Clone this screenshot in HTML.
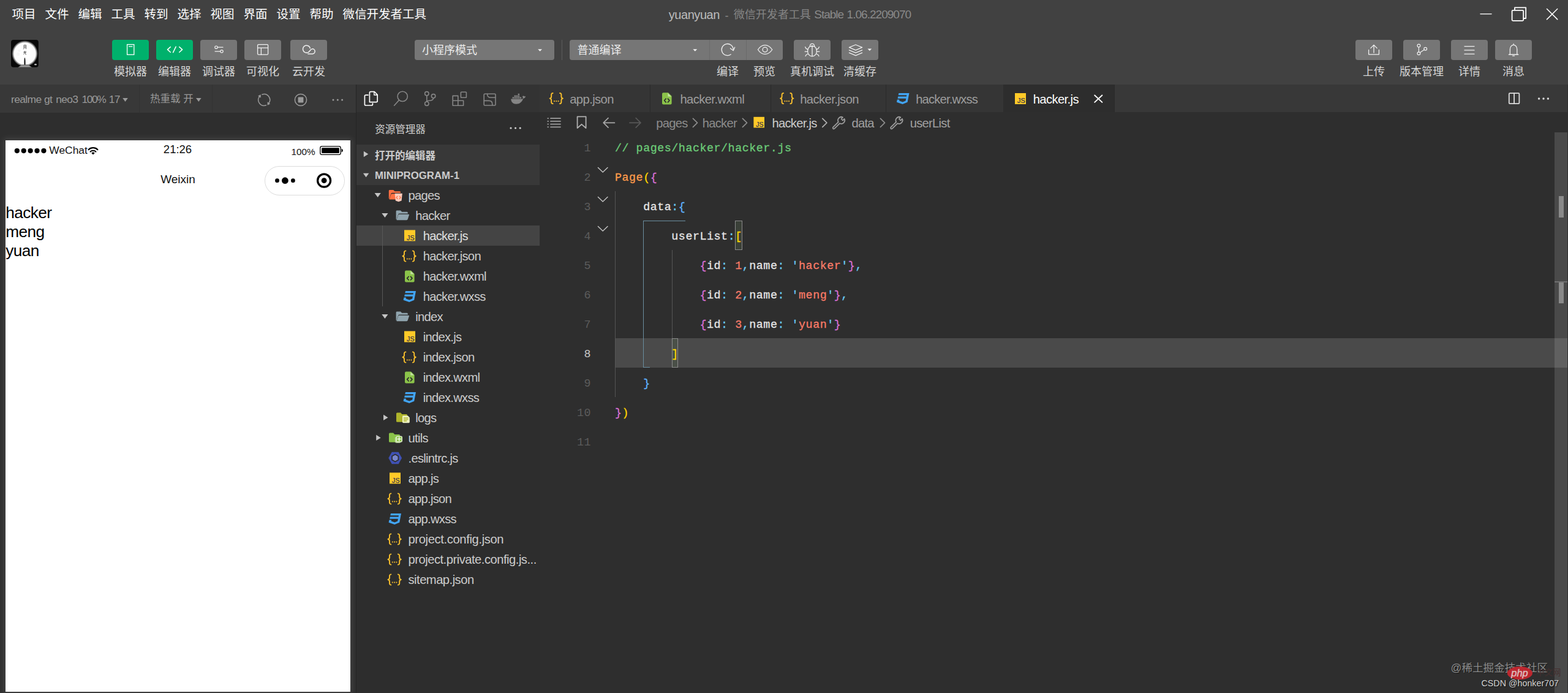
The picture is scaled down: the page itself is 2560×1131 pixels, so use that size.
<!DOCTYPE html>
<html lang="zh-CN"><head><meta charset="utf-8"><title>微信开发者工具</title><style>
html,body{margin:0;padding:0;background:#2e2e2e;}
body{width:2560px;height:1131px;overflow:hidden;font-family:"Liberation Sans","Noto Sans CJK SC",sans-serif;}
#root{position:relative;width:2560px;height:1131px;overflow:hidden;}
#root div,#root span{position:absolute;white-space:pre;box-sizing:border-box;}
#root section{position:absolute;left:0;top:0;width:0;height:0;}
#root svg{position:absolute;left:0;top:0;}
</style></head><body><div id="root">
<section id="frames">
<div style="left:0px;top:0px;width:2560px;height:138px;background:#414141;"></div>
<div style="left:0px;top:138px;width:581px;height:46px;background:#383838;"></div>
<div style="left:0px;top:184px;width:581px;height:947px;background:#2e2e2e;"></div>
<div style="left:0;top:184px;width:581px;height:947px;overflow:hidden"><div style="left:9px;top:45px;width:563px;height:900px;background:#fff;box-shadow:0 0 9px 3px rgba(255,255,255,0.10)"></div></div>
<div style="left:581px;top:138px;width:1px;height:993px;background:#252525;"></div>
<div style="left:582px;top:138px;width:299px;height:45px;background:#333333;"></div>
<div style="left:582px;top:183px;width:299px;height:948px;background:#2d2d2d;"></div>
<div style="left:582px;top:236px;width:299px;height:66px;background:#383838;"></div>
<div style="left:582px;top:368px;width:299px;height:33px;background:#444444;"></div>
<div style="left:881px;top:138px;width:1679px;height:45px;background:#383838;"></div>
<div style="left:881px;top:183px;width:1679px;height:948px;background:#2e2e2e;"></div>
</section>
<section id="menubar">
<span style="left:19.5px;top:8.3px;height:31px;line-height:31px;font-size:19.5px;color:#ffffff;">项目</span>
<span style="left:73.5px;top:8.3px;height:31px;line-height:31px;font-size:19.5px;color:#ffffff;">文件</span>
<span style="left:127.5px;top:8.3px;height:31px;line-height:31px;font-size:19.5px;color:#ffffff;">编辑</span>
<span style="left:181.5px;top:8.3px;height:31px;line-height:31px;font-size:19.5px;color:#ffffff;">工具</span>
<span style="left:235.5px;top:8.3px;height:31px;line-height:31px;font-size:19.5px;color:#ffffff;">转到</span>
<span style="left:289.5px;top:8.3px;height:31px;line-height:31px;font-size:19.5px;color:#ffffff;">选择</span>
<span style="left:343.5px;top:8.3px;height:31px;line-height:31px;font-size:19.5px;color:#ffffff;">视图</span>
<span style="left:397.5px;top:8.3px;height:31px;line-height:31px;font-size:19.5px;color:#ffffff;">界面</span>
<span style="left:451.5px;top:8.3px;height:31px;line-height:31px;font-size:19.5px;color:#ffffff;">设置</span>
<span style="left:505.5px;top:8.3px;height:31px;line-height:31px;font-size:19.5px;color:#ffffff;">帮助</span>
<span style="left:559.5px;top:8.3px;height:31px;line-height:31px;font-size:19.5px;color:#ffffff;">微信开发者工具</span>
<span style="left:1091.8px;top:7.999999999999999px;height:32px;line-height:32px;font-size:20px;color:#bcbcbc;letter-spacing:-0.45px;">yuanyuan</span>
<span style="left:1183.6px;top:11.7px;height:29px;line-height:29px;font-size:18px;color:#8a8a8a;">-</span>
<span style="left:1197.7px;top:9.600000000000001px;height:29px;line-height:29px;font-size:18px;color:#858585;">微信开发者工具</span>
<span style="left:1329.2px;top:9.100000000000001px;height:30px;line-height:30px;font-size:19px;color:#8a8a8a;letter-spacing:-0.98px;">Stable</span>
<span style="left:1382.6px;top:9.100000000000001px;height:30px;line-height:30px;font-size:19px;color:#8a8a8a;letter-spacing:-0.98px;">1.06.2209070</span>
</section>
<section id="toolbar">
<div style="left:183px;top:65px;width:60px;height:33px;background:#00b16c;border-radius:4px;"></div>
<div style="left:255px;top:65px;width:60px;height:33px;background:#00b16c;border-radius:4px;"></div>
<div style="left:327px;top:65px;width:60px;height:33px;background:#767676;border-radius:4px;"></div>
<div style="left:399px;top:65px;width:60px;height:33px;background:#767676;border-radius:4px;"></div>
<div style="left:474px;top:65px;width:60px;height:33px;background:#767676;border-radius:4px;"></div>
<span style="left:213px;top:102.7px;height:29px;line-height:29px;font-size:18px;color:#d6d6d6;transform:translateX(-50%);">模拟器</span>
<span style="left:285px;top:102.7px;height:29px;line-height:29px;font-size:18px;color:#d6d6d6;transform:translateX(-50%);">编辑器</span>
<span style="left:357px;top:102.7px;height:29px;line-height:29px;font-size:18px;color:#d6d6d6;transform:translateX(-50%);">调试器</span>
<span style="left:429px;top:102.7px;height:29px;line-height:29px;font-size:18px;color:#d6d6d6;transform:translateX(-50%);">可视化</span>
<span style="left:504px;top:102.7px;height:29px;line-height:29px;font-size:18px;color:#d6d6d6;transform:translateX(-50%);">云开发</span>
<div style="left:677px;top:65px;width:228px;height:33px;background:#767676;border-radius:4px;"></div>
<span style="left:689px;top:68.3px;height:29px;line-height:29px;font-size:18px;color:#ececec;">小程序模式</span>
<div style="left:917px;top:65px;width:1px;height:33px;background:#5c5c5c;"></div>
<div style="left:930px;top:65px;width:348px;height:33px;background:#767676;border-radius:4px;"></div>
<div style="left:1158px;top:65px;width:1px;height:33px;background:#6a6a6a;"></div>
<div style="left:1218px;top:65px;width:1px;height:33px;background:#6a6a6a;"></div>
<span style="left:942.5px;top:68.3px;height:29px;line-height:29px;font-size:18px;color:#ececec;">普通编译</span>
<div style="left:1296px;top:65px;width:60px;height:33px;background:#767676;border-radius:4px;"></div>
<div style="left:1374px;top:65px;width:60px;height:33px;background:#767676;border-radius:4px;"></div>
<span style="left:1188px;top:102.7px;height:29px;line-height:29px;font-size:18px;color:#d6d6d6;transform:translateX(-50%);">编译</span>
<span style="left:1248px;top:102.7px;height:29px;line-height:29px;font-size:18px;color:#d6d6d6;transform:translateX(-50%);">预览</span>
<span style="left:1326px;top:102.7px;height:29px;line-height:29px;font-size:18px;color:#d6d6d6;transform:translateX(-50%);">真机调试</span>
<span style="left:1404px;top:102.7px;height:29px;line-height:29px;font-size:18px;color:#d6d6d6;transform:translateX(-50%);">清缓存</span>
<div style="left:2213px;top:65px;width:60px;height:33px;background:#767676;border-radius:4px;"></div>
<div style="left:2291px;top:65px;width:60px;height:33px;background:#767676;border-radius:4px;"></div>
<div style="left:2369px;top:65px;width:60px;height:33px;background:#767676;border-radius:4px;"></div>
<div style="left:2441px;top:65px;width:60px;height:33px;background:#767676;border-radius:4px;"></div>
<span style="left:2243px;top:102.7px;height:29px;line-height:29px;font-size:18px;color:#d6d6d6;transform:translateX(-50%);">上传</span>
<span style="left:2321px;top:102.7px;height:29px;line-height:29px;font-size:18px;color:#d6d6d6;transform:translateX(-50%);">版本管理</span>
<span style="left:2399px;top:102.7px;height:29px;line-height:29px;font-size:18px;color:#d6d6d6;transform:translateX(-50%);">详情</span>
<span style="left:2471px;top:102.7px;height:29px;line-height:29px;font-size:18px;color:#d6d6d6;transform:translateX(-50%);">消息</span>
</section>
<section id="simulator-toolbar">
<span style="left:18.1px;top:148.10000000000002px;height:28px;line-height:28px;font-size:17.4px;color:#999999;letter-spacing:-0.62px;">realme</span>
<span style="left:71.9px;top:148.10000000000002px;height:28px;line-height:28px;font-size:17.4px;color:#999999;letter-spacing:-0.62px;">gt</span>
<span style="left:91.2px;top:148.10000000000002px;height:28px;line-height:28px;font-size:17.4px;color:#999999;letter-spacing:-0.62px;">neo3</span>
<span style="left:133.6px;top:148.10000000000002px;height:28px;line-height:28px;font-size:17.4px;color:#999999;letter-spacing:-1.45px;">100%</span>
<span style="left:177.8px;top:148.10000000000002px;height:28px;line-height:28px;font-size:17.4px;color:#999999;letter-spacing:-0.62px;">17</span>
<div style="left:227px;top:138px;width:1px;height:46px;background:#333333;"></div>
<div style="left:346px;top:138px;width:1px;height:46px;background:#333333;"></div>
<span style="left:245px;top:148.4px;height:26px;line-height:26px;font-size:16.5px;color:#999999;">热重载</span>
<span style="left:299.2px;top:148.4px;height:26px;line-height:26px;font-size:16.5px;color:#999999;">开</span>
</section>
<section id="simulator">
<span style="left:80.3px;top:230.70000000000002px;height:28px;line-height:28px;font-size:17.4px;color:#111111;">WeChat</span>
<span style="left:290px;top:229.4px;height:30px;line-height:30px;font-size:18.5px;color:#111111;transform:translateX(-50%);">21:26</span>
<span style="left:475.5px;top:235.60000000000002px;height:24px;line-height:24px;font-size:15.3px;color:#111111;">100%</span>
<span style="left:290.5px;top:278.40000000000003px;height:30px;line-height:30px;font-size:19px;color:#111111;transform:translateX(-50%);">Weixin</span>
<div style="left:432px;top:271px;width:131px;height:48px;background:#ffffff;border:1px solid #dcdcdc;border-radius:24px;"></div>
<span style="left:9.3px;top:326.2px;height:42px;line-height:42px;font-size:26.2px;color:#000000;letter-spacing:-0.6px;">hacker</span>
<span style="left:9.3px;top:357.0px;height:42px;line-height:42px;font-size:26.2px;color:#000000;letter-spacing:-0.6px;">meng</span>
<span style="left:9.3px;top:387.8px;height:42px;line-height:42px;font-size:26.2px;color:#000000;letter-spacing:-0.6px;">yuan</span>
</section>
<section id="explorer">
<span style="left:612.3px;top:197.8px;height:26px;line-height:26px;font-size:16.5px;color:#d0d0d0;">资源管理器</span>
<span style="left:612px;top:240.8px;height:26px;line-height:26px;font-size:16.5px;color:#cccccc;font-weight:bold;">打开的编辑器</span>
<span style="left:612px;top:272.7px;height:27px;line-height:27px;font-size:16.8px;color:#cccccc;font-weight:bold;">MINIPROGRAM-1</span>
<span style="left:666.5px;top:302.90000000000003px;height:32px;line-height:32px;font-size:20.2px;color:#cccccc;letter-spacing:-0.72px;">pages</span>
<span style="left:678.2px;top:335.90000000000003px;height:32px;line-height:32px;font-size:20.2px;color:#cccccc;letter-spacing:-0.72px;">hacker</span>
<span style="left:690.7px;top:368.90000000000003px;height:32px;line-height:32px;font-size:20.2px;color:#e0e0e0;letter-spacing:-0.72px;">hacker.js</span>
<span style="left:690.7px;top:401.90000000000003px;height:32px;line-height:32px;font-size:20.2px;color:#cccccc;letter-spacing:-0.72px;">hacker.json</span>
<span style="left:690.7px;top:434.90000000000003px;height:32px;line-height:32px;font-size:20.2px;color:#cccccc;letter-spacing:-0.72px;">hacker.wxml</span>
<span style="left:690.7px;top:467.90000000000003px;height:32px;line-height:32px;font-size:20.2px;color:#cccccc;letter-spacing:-0.72px;">hacker.wxss</span>
<span style="left:678.2px;top:500.90000000000003px;height:32px;line-height:32px;font-size:20.2px;color:#cccccc;letter-spacing:-0.72px;">index</span>
<span style="left:690.7px;top:533.9px;height:32px;line-height:32px;font-size:20.2px;color:#cccccc;letter-spacing:-0.72px;">index.js</span>
<span style="left:690.7px;top:566.9px;height:32px;line-height:32px;font-size:20.2px;color:#cccccc;letter-spacing:-0.72px;">index.json</span>
<span style="left:690.7px;top:599.9px;height:32px;line-height:32px;font-size:20.2px;color:#cccccc;letter-spacing:-0.72px;">index.wxml</span>
<span style="left:690.7px;top:632.9px;height:32px;line-height:32px;font-size:20.2px;color:#cccccc;letter-spacing:-0.72px;">index.wxss</span>
<span style="left:678.2px;top:665.9px;height:32px;line-height:32px;font-size:20.2px;color:#cccccc;letter-spacing:-0.72px;">logs</span>
<span style="left:666.5px;top:698.9px;height:32px;line-height:32px;font-size:20.2px;color:#cccccc;letter-spacing:-0.72px;">utils</span>
<span style="left:666.5px;top:731.9px;height:32px;line-height:32px;font-size:20.2px;color:#cccccc;letter-spacing:-0.72px;">.eslintrc.js</span>
<span style="left:666.5px;top:764.9px;height:32px;line-height:32px;font-size:20.2px;color:#cccccc;letter-spacing:-0.72px;">app.js</span>
<span style="left:666.5px;top:797.9px;height:32px;line-height:32px;font-size:20.2px;color:#cccccc;letter-spacing:-0.72px;">app.json</span>
<span style="left:666.5px;top:830.9px;height:32px;line-height:32px;font-size:20.2px;color:#cccccc;letter-spacing:-0.72px;">app.wxss</span>
<span style="left:666.5px;top:863.9px;height:32px;line-height:32px;font-size:20.2px;color:#cccccc;letter-spacing:-0.37px;">project.config.json</span>
<span style="left:666.5px;top:896.9px;height:32px;line-height:32px;font-size:20.2px;color:#cccccc;letter-spacing:-0.5px;">project.private.config.js...</span>
<span style="left:666.5px;top:929.9px;height:32px;line-height:32px;font-size:20.2px;color:#cccccc;letter-spacing:-0.52px;">sitemap.json</span>
<div style="left:624px;top:368px;width:1px;height:132px;background:#585858;"></div>
</section>
<section id="tabs">
<div style="left:881px;top:138px;width:180px;height:45px;background:#353535;"></div>
<div style="left:1061px;top:138px;width:1px;height:45px;background:#2a2a2a;"></div>
<span style="left:930.2px;top:145.9px;height:32px;line-height:32px;font-size:20.2px;color:#9d9d9d;letter-spacing:-0.58px;">app.json</span>
<div style="left:1062px;top:138px;width:196px;height:45px;background:#353535;"></div>
<div style="left:1258px;top:138px;width:1px;height:45px;background:#2a2a2a;"></div>
<span style="left:1110.4px;top:145.9px;height:32px;line-height:32px;font-size:20.2px;color:#9d9d9d;letter-spacing:-0.58px;">hacker.wxml</span>
<div style="left:1259px;top:138px;width:187px;height:45px;background:#353535;"></div>
<div style="left:1446px;top:138px;width:1px;height:45px;background:#2a2a2a;"></div>
<span style="left:1306.2px;top:145.9px;height:32px;line-height:32px;font-size:20.2px;color:#9d9d9d;letter-spacing:-0.58px;">hacker.json</span>
<div style="left:1447px;top:138px;width:191px;height:45px;background:#353535;"></div>
<div style="left:1638px;top:138px;width:1px;height:45px;background:#2a2a2a;"></div>
<span style="left:1495.2px;top:145.9px;height:32px;line-height:32px;font-size:20.2px;color:#9d9d9d;letter-spacing:-0.82px;">hacker.wxss</span>
<div style="left:1638px;top:138px;width:180.6px;height:45px;background:#2d2d2d;"></div>
<div style="left:1818.6px;top:138px;width:1px;height:45px;background:#2a2a2a;"></div>
<span style="left:1686.7px;top:145.9px;height:32px;line-height:32px;font-size:20.2px;color:#ffffff;letter-spacing:-0.6px;">hacker.js</span>
</section>
<section id="breadcrumbs">
<span style="left:1071.2px;top:184.8px;height:32px;line-height:32px;font-size:20.2px;color:#8c8c8c;letter-spacing:-0.72px;">pages</span>
<span style="left:1146.7px;top:184.8px;height:32px;line-height:32px;font-size:20.2px;color:#8c8c8c;letter-spacing:-0.72px;">hacker</span>
<span style="left:1260.4px;top:184.8px;height:32px;line-height:32px;font-size:20.2px;color:#cccccc;letter-spacing:-0.72px;">hacker.js</span>
<span style="left:1390.4px;top:184.8px;height:32px;line-height:32px;font-size:20.2px;color:#a0a0a0;letter-spacing:-0.72px;">data</span>
<span style="left:1485.7px;top:184.8px;height:32px;line-height:32px;font-size:20.2px;color:#a0a0a0;letter-spacing:-0.72px;">userList</span>
</section>
<section id="editor">
<div style="left:1004px;top:552px;width:1534px;height:48px;background:#4a4a4a;"></div>
<div style="left:2538px;top:216px;width:21px;height:915px;background:#4a4a4a;"></div>
<div style="left:2538px;top:552px;width:21px;height:48px;background:#606060;"></div>
<div style="left:2545px;top:320px;width:8px;height:35px;background:#8a8a8a;"></div>
<div style="left:2538px;top:459px;width:21px;height:2px;background:#707070;"></div>
<div style="left:2545px;top:461px;width:8px;height:34px;background:#8a8a8a;"></div>
<div style="left:1004px;top:312px;width:1px;height:336px;background:#555555;"></div>
<div style="left:1097px;top:408px;width:1px;height:144px;background:#555555;"></div>
<div style="left:1050px;top:360px;width:1px;height:240px;background:#6a8ea0;"></div>
<div style="left:1050px;top:360px;width:69px;height:1px;background:#6a8ea0;"></div>
<div style="left:1050px;top:599px;width:11px;height:1px;background:#6a8ea0;"></div>
<div style="left:1200px;top:360px;width:12px;height:48px;background:#3a4038;border:1px solid #8a8a8a;"></div>
<div style="left:1097px;top:552px;width:10px;height:48px;background:#4a5048;border:1px solid #8a8a8a;"></div>
<div style="left:1004px;top:219.4px;height:48px;line-height:48px;font-family:'Liberation Mono',monospace;font-size:18.33px;letter-spacing:0.54px;color:#e6e6e6;-webkit-text-stroke:0.3px"><span style="position:static;color:#6ccb78">// pages/hacker/hacker.js</span></div>
<div style="left:900px;width:65px;text-align:right;top:218.9px;height:48px;line-height:48px;font-family:'Liberation Mono',monospace;font-size:18.33px;letter-spacing:0.54px;color:#5c5c5c">1</div>
<div style="left:1004px;top:267.4px;height:48px;line-height:48px;font-family:'Liberation Mono',monospace;font-size:18.33px;letter-spacing:0.54px;color:#e6e6e6;-webkit-text-stroke:0.3px"><span style="position:static;color:#fc9b4b">Page</span><span style="position:static;color:#ffd700">(</span><span style="position:static;color:#da70d6">{</span></div>
<div style="left:900px;width:65px;text-align:right;top:266.9px;height:48px;line-height:48px;font-family:'Liberation Mono',monospace;font-size:18.33px;letter-spacing:0.54px;color:#5c5c5c">2</div>
<div style="left:1004px;top:315.4px;height:48px;line-height:48px;font-family:'Liberation Mono',monospace;font-size:18.33px;letter-spacing:0.54px;color:#e6e6e6;-webkit-text-stroke:0.3px">    <span style="position:static;color:#e6e6e6">data</span><span style="position:static;color:#6ccdf5">:</span><span style="position:static;color:#5fb3ff">{</span></div>
<div style="left:900px;width:65px;text-align:right;top:314.9px;height:48px;line-height:48px;font-family:'Liberation Mono',monospace;font-size:18.33px;letter-spacing:0.54px;color:#5c5c5c">3</div>
<div style="left:1004px;top:363.4px;height:48px;line-height:48px;font-family:'Liberation Mono',monospace;font-size:18.33px;letter-spacing:0.54px;color:#e6e6e6;-webkit-text-stroke:0.3px">        <span style="position:static;color:#e6e6e6">userList</span><span style="position:static;color:#6ccdf5">:</span><span style="position:static;color:#ffd700">[</span></div>
<div style="left:900px;width:65px;text-align:right;top:362.9px;height:48px;line-height:48px;font-family:'Liberation Mono',monospace;font-size:18.33px;letter-spacing:0.54px;color:#5c5c5c">4</div>
<div style="left:1004px;top:411.4px;height:48px;line-height:48px;font-family:'Liberation Mono',monospace;font-size:18.33px;letter-spacing:0.54px;color:#e6e6e6;-webkit-text-stroke:0.3px">            <span style="position:static;color:#da70d6">{</span><span style="position:static;color:#e6e6e6">id</span><span style="position:static;color:#6ccdf5">:</span> <span style="position:static;color:#f97b68">1</span><span style="position:static;color:#6ccdf5">,</span><span style="position:static;color:#e6e6e6">name</span><span style="position:static;color:#6ccdf5">:</span> <span style="position:static;color:#6ccdf5">&#x27;</span><span style="position:static;color:#f97b68">hacker</span><span style="position:static;color:#6ccdf5">&#x27;</span><span style="position:static;color:#da70d6">}</span><span style="position:static;color:#6ccdf5">,</span></div>
<div style="left:900px;width:65px;text-align:right;top:410.9px;height:48px;line-height:48px;font-family:'Liberation Mono',monospace;font-size:18.33px;letter-spacing:0.54px;color:#5c5c5c">5</div>
<div style="left:1004px;top:459.4px;height:48px;line-height:48px;font-family:'Liberation Mono',monospace;font-size:18.33px;letter-spacing:0.54px;color:#e6e6e6;-webkit-text-stroke:0.3px">            <span style="position:static;color:#da70d6">{</span><span style="position:static;color:#e6e6e6">id</span><span style="position:static;color:#6ccdf5">:</span> <span style="position:static;color:#f97b68">2</span><span style="position:static;color:#6ccdf5">,</span><span style="position:static;color:#e6e6e6">name</span><span style="position:static;color:#6ccdf5">:</span> <span style="position:static;color:#6ccdf5">&#x27;</span><span style="position:static;color:#f97b68">meng</span><span style="position:static;color:#6ccdf5">&#x27;</span><span style="position:static;color:#da70d6">}</span><span style="position:static;color:#6ccdf5">,</span></div>
<div style="left:900px;width:65px;text-align:right;top:458.9px;height:48px;line-height:48px;font-family:'Liberation Mono',monospace;font-size:18.33px;letter-spacing:0.54px;color:#5c5c5c">6</div>
<div style="left:1004px;top:507.4px;height:48px;line-height:48px;font-family:'Liberation Mono',monospace;font-size:18.33px;letter-spacing:0.54px;color:#e6e6e6;-webkit-text-stroke:0.3px">            <span style="position:static;color:#da70d6">{</span><span style="position:static;color:#e6e6e6">id</span><span style="position:static;color:#6ccdf5">:</span> <span style="position:static;color:#f97b68">3</span><span style="position:static;color:#6ccdf5">,</span><span style="position:static;color:#e6e6e6">name</span><span style="position:static;color:#6ccdf5">:</span> <span style="position:static;color:#6ccdf5">&#x27;</span><span style="position:static;color:#f97b68">yuan</span><span style="position:static;color:#6ccdf5">&#x27;</span><span style="position:static;color:#da70d6">}</span></div>
<div style="left:900px;width:65px;text-align:right;top:506.9px;height:48px;line-height:48px;font-family:'Liberation Mono',monospace;font-size:18.33px;letter-spacing:0.54px;color:#5c5c5c">7</div>
<div style="left:1004px;top:555.4px;height:48px;line-height:48px;font-family:'Liberation Mono',monospace;font-size:18.33px;letter-spacing:0.54px;color:#e6e6e6;-webkit-text-stroke:0.3px">        <span style="position:static;color:#ffd700">]</span></div>
<div style="left:900px;width:65px;text-align:right;top:554.9px;height:48px;line-height:48px;font-family:'Liberation Mono',monospace;font-size:18.33px;letter-spacing:0.54px;color:#c6c6c6">8</div>
<div style="left:1004px;top:603.4px;height:48px;line-height:48px;font-family:'Liberation Mono',monospace;font-size:18.33px;letter-spacing:0.54px;color:#e6e6e6;-webkit-text-stroke:0.3px">    <span style="position:static;color:#5fb3ff">}</span></div>
<div style="left:900px;width:65px;text-align:right;top:602.9px;height:48px;line-height:48px;font-family:'Liberation Mono',monospace;font-size:18.33px;letter-spacing:0.54px;color:#5c5c5c">9</div>
<div style="left:1004px;top:651.4px;height:48px;line-height:48px;font-family:'Liberation Mono',monospace;font-size:18.33px;letter-spacing:0.54px;color:#e6e6e6;-webkit-text-stroke:0.3px"><span style="position:static;color:#da70d6">}</span><span style="position:static;color:#ffd700">)</span></div>
<div style="left:900px;width:65px;text-align:right;top:650.9px;height:48px;line-height:48px;font-family:'Liberation Mono',monospace;font-size:18.33px;letter-spacing:0.54px;color:#5c5c5c">10</div>
<div style="left:1004px;top:699.4px;height:48px;line-height:48px;font-family:'Liberation Mono',monospace;font-size:18.33px;letter-spacing:0.54px;color:#e6e6e6;-webkit-text-stroke:0.3px"></div>
<div style="left:900px;width:65px;text-align:right;top:698.9px;height:48px;line-height:48px;font-family:'Liberation Mono',monospace;font-size:18.33px;letter-spacing:0.54px;color:#5c5c5c">11</div>
<div style="left:2559px;top:138px;width:1px;height:993px;background:#2e2e2e;"></div>
</section>
<section id="watermarks">
<span style="left:2368.5px;top:1076.3999999999999px;height:28px;line-height:28px;font-size:17.6px;color:#8c8c8c;text-shadow:1px 1px 1px #151515;">@</span>
<span style="left:2386.4px;top:1076.3999999999999px;height:28px;line-height:28px;font-size:17.6px;color:#8c8c8c;text-shadow:1px 1px 0 rgba(21,21,21,0.8);">稀土掘金技术社区</span>
<span style="left:2508px;top:1086.8px;height:22px;line-height:22px;font-size:13.5px;color:#442f2f;">中文网</span>
<span style="left:2418.5px;top:1103.8999999999999px;height:23px;line-height:23px;font-size:14.3px;color:#d2d2d2;text-shadow:1px 1px 1px #151515;">CSDN @honker707</span>
</section>
<svg width="2560" height="1131" viewBox="0 0 2560 1131">
<path d="M2417 22.8H2435" fill="none" stroke="#e8e8e8" stroke-width="1.5" stroke-linecap="round" stroke-linejoin="round" />
<rect x="2468.6" y="16.8" width="18.6" height="17" rx="1.5" fill="none" stroke="#fff" stroke-width="1.8"/>
<path d="M2473 16V12.4H2491.2V30H2487.6" fill="none" stroke="#fff" stroke-width="1.8" stroke-linecap="round" stroke-linejoin="round" />
<path d="M2525.5 14.5L2542.7 31.6M2542.7 14.5L2525.5 31.6" fill="none" stroke="#fff" stroke-width="1.5" stroke-linecap="round" stroke-linejoin="round" />
<rect x="207.6" y="72.6" width="11.2" height="16.6" rx="0" fill="none" stroke="#ffffff" stroke-width="1.3"/>
<path d="M210.5 75.8H216" fill="none" stroke="#ffffff" stroke-width="1.3" stroke-linecap="round" stroke-linejoin="round" />
<path d="M278.3 76.6L273.5 80.9L278.3 85.2M282.6 85.6L287.2 76.2M292.8 76.6L297.6 80.9L292.8 85.2" fill="none" stroke="#ffffff" stroke-width="1.5" stroke-linecap="round" stroke-linejoin="round" />
<circle cx="353" cy="77.2" r="2.2" fill="none" stroke="#f0f0f0" stroke-width="1.2"/>
<path d="M355.4 77.2H364" fill="none" stroke="#f0f0f0" stroke-width="1.2" stroke-linecap="round" stroke-linejoin="round" />
<circle cx="362" cy="83.8" r="2.2" fill="none" stroke="#f0f0f0" stroke-width="1.2"/>
<path d="M351 83.8H359.6" fill="none" stroke="#f0f0f0" stroke-width="1.2" stroke-linecap="round" stroke-linejoin="round" />
<rect x="420.6" y="72.6" width="17" height="16.6" rx="1.5" fill="none" stroke="#f0f0f0" stroke-width="1.3"/>
<path d="M420.6 78.2H437.6M426.4 78.2V89.2" fill="none" stroke="#f0f0f0" stroke-width="1.3" stroke-linecap="round" stroke-linejoin="round" />
<path d="M506.3 78.6A5.98 5.98 0 1 0 501.6 86.03C505.6 86 506 79.8 510.1 79.8A4.03 4.03 0 0 1 510.1 87.9H502.9" fill="none" stroke="#f0f0f0" stroke-width="1.55" stroke-linecap="round" stroke-linejoin="round" />
<polygon points="878.2,80.3 885,80.3 881.6,83.8" fill="#f2f2f2"/>
<polygon points="1131.4,80.3 1138.2,80.3 1134.8,83.8" fill="#f2f2f2"/>
<path d="M1193.2 88.8A9.5 9.5 0 1 1 1197.2 80.6" fill="none" stroke="#f0f0f0" stroke-width="1.3" stroke-linecap="round" stroke-linejoin="round" />
<path d="M1192.4 79L1197.2 82.6L1199.6 77.2" fill="none" stroke="#f0f0f0" stroke-width="1.3" stroke-linecap="round" stroke-linejoin="round" />
<path d="M1237.4 81C1241 75.6 1245 73.6 1249 73.6C1253 73.6 1257 75.6 1260.8 81C1257 86.4 1253 88.4 1249 88.4C1245 88.4 1241 86.4 1237.4 81Z" fill="none" stroke="#f0f0f0" stroke-width="1.3" stroke-linecap="round" stroke-linejoin="round" />
<circle cx="1249" cy="81" r="3.9" fill="none" stroke="#f0f0f0" stroke-width="1.3"/>
<path d="M1326 74.8C1321.4 74.8 1318.6 78.6 1318.6 83.4C1318.6 88.2 1321.6 91.8 1326 91.8C1330.4 91.8 1333.4 88.2 1333.4 83.4C1333.4 78.6 1330.6 74.8 1326 74.8Z" fill="none" stroke="#f0f0f0" stroke-width="1.3" stroke-linecap="round" stroke-linejoin="round" />
<path d="M1326 75V91.6" fill="none" stroke="#f0f0f0" stroke-width="1.3" stroke-linecap="round" stroke-linejoin="round" />
<path d="M1322.2 75.6C1322.4 72.8 1324 71.4 1326 71.4C1328 71.4 1329.6 72.8 1329.8 75.6Z" fill="none" stroke="#f0f0f0" stroke-width="1.2" stroke-linecap="round" stroke-linejoin="round" />
<path d="M1318.8 80.6L1316.2 79.4L1314.6 76.6M1318.4 84.2H1314.2M1319.2 88L1316.4 89.2L1315 91.6M1333.2 80.6L1335.8 79.4L1337.4 76.6M1333.6 84.2H1337.8M1332.8 88L1335.6 89.2L1337 91.6" fill="none" stroke="#f0f0f0" stroke-width="1.2" stroke-linecap="round" stroke-linejoin="round" />
<path d="M1397 73L1407.6 77.4L1397 81.8L1386.4 77.4Z" fill="none" stroke="#f0f0f0" stroke-width="1.3" stroke-linecap="round" stroke-linejoin="round" />
<path d="M1386.4 81.8L1397 86.2L1407.6 81.8M1386.4 86.2L1397 90.6L1407.6 86.2" fill="none" stroke="#f0f0f0" stroke-width="1.3" stroke-linecap="round" stroke-linejoin="round" />
<polygon points="1416.4,79.6 1423.2,79.6 1419.8,83.1" fill="#f2f2f2"/>
<path d="M2234.6 81.4V88.8H2251.4V81.4" fill="none" stroke="#f0f0f0" stroke-width="1.3" stroke-linecap="round" stroke-linejoin="round" />
<path d="M2243 86V73.6M2237.8 78.6L2243 73.4L2248.2 78.6" fill="none" stroke="#f0f0f0" stroke-width="1.3" stroke-linecap="round" stroke-linejoin="round" />
<circle cx="2316.4" cy="74.6" r="2.4" fill="none" stroke="#f0f0f0" stroke-width="1.2"/>
<circle cx="2316.4" cy="87.2" r="2.4" fill="none" stroke="#f0f0f0" stroke-width="1.2"/>
<circle cx="2327.2" cy="79.8" r="2.4" fill="none" stroke="#f0f0f0" stroke-width="1.2"/>
<path d="M2316.4 77V84.8M2318.4 85.8L2325.2 81.2" fill="none" stroke="#f0f0f0" stroke-width="1.2" stroke-linecap="round" stroke-linejoin="round" />
<path d="M2391 75.6H2407M2391 81.9H2407M2391 88.2H2407" fill="none" stroke="#f0f0f0" stroke-width="1.3" stroke-linecap="round" stroke-linejoin="round" />
<path d="M2463.4 89H2478.8M2465.4 88.8V80.4C2465.4 76.2 2468 73.4 2471.1 73.4C2474.2 73.4 2476.8 76.2 2476.8 80.4V88.8" fill="none" stroke="#f0f0f0" stroke-width="1.3" stroke-linecap="round" stroke-linejoin="round" />
<path d="M2471.1 73.2V71.4M2469.6 91.2H2472.6" fill="none" stroke="#f0f0f0" stroke-width="1.2" stroke-linecap="round" stroke-linejoin="round" />
<polygon points="200.2,160 208.8,160 204.5,166" fill="#9a9a9a"/>
<polygon points="320,160 328.6,160 324.3,166" fill="#9a9a9a"/>
<path d="M427.99 154.17A9.4 9.4 0 0 1 438.9 168.39" fill="none" stroke="#9a9a9a" stroke-width="1.5" stroke-linecap="round" stroke-linejoin="round" />
<path d="M434.41 171.83A9.4 9.4 0 0 1 423.5 157.61" fill="none" stroke="#9a9a9a" stroke-width="1.5" stroke-linecap="round" stroke-linejoin="round" />
<polygon points="436.7,171.8 441.2,169.4 436.6,166.2" fill="#9a9a9a"/>
<polygon points="425.7,154.2 421.2,156.6 425.8,159.8" fill="#9a9a9a"/>
<circle cx="491" cy="163" r="9.6" fill="none" stroke="#9a9a9a" stroke-width="1.5"/>
<rect x="486.6" y="158.6" width="8.8" height="8.8" rx="1" fill="#9a9a9a"/>
<circle cx="544" cy="163" r="1.5" fill="#9a9a9a"/>
<circle cx="551.3" cy="163" r="1.5" fill="#9a9a9a"/>
<circle cx="558.6" cy="163" r="1.5" fill="#9a9a9a"/>
<circle cx="27.8" cy="246.1" r="4.1" fill="#000"/>
<circle cx="38.7" cy="246.1" r="4.1" fill="#000"/>
<circle cx="49.6" cy="246.1" r="4.1" fill="#000"/>
<circle cx="60.5" cy="246.1" r="4.1" fill="#000"/>
<circle cx="71.4" cy="246.1" r="4.1" fill="#000"/>
<path d="M144.6 244.2A10.6 10.6 0 0 1 159.4 244.2" fill="none" stroke="#000" stroke-width="2.2" stroke-linecap="round" stroke-linejoin="round" />
<path d="M147.6 247.6A6.4 6.4 0 0 1 156.4 247.6" fill="none" stroke="#000" stroke-width="2.0" stroke-linecap="round" stroke-linejoin="round" />
<polygon points="152,252.4 149.2,249.6 152,248.2 154.8,249.6" fill="#000"/>
<rect x="522.8" y="238.9" width="33.4" height="13.4" rx="2.5" fill="none" stroke="#000" stroke-width="1.3"/>
<rect x="525.2" y="241.3" width="28.6" height="8.6" rx="1.2" fill="#000"/>
<path d="M557.6 242.8C560.6 243.4 560.6 247.8 557.6 248.4Z" fill="#000"/>
<circle cx="452.5" cy="294.7" r="3.4" fill="#000"/><circle cx="465.4" cy="294.7" r="5.4" fill="#000"/><circle cx="478.4" cy="294.7" r="3.4" fill="#000"/>
<circle cx="529.1" cy="294.7" r="10.5" fill="none" stroke="#000" stroke-width="3.3"/>
<circle cx="529.1" cy="294.7" r="4.4" fill="#000"/>
<defs><radialGradient id="moon" cx="50%" cy="50%" r="50%"><stop offset="0" stop-color="#ffffff"/><stop offset="0.82" stop-color="#fcfcfc"/><stop offset="0.9" stop-color="#8e8e8e"/><stop offset="1" stop-color="#080808"/></radialGradient><linearGradient id="gnd" x1="0" y1="0" x2="0" y2="1"><stop offset="0" stop-color="#6a6a6a"/><stop offset="1" stop-color="#b8b8b8"/></linearGradient><clipPath id="avc"><rect x="18" y="65" width="44.8" height="44.8" rx="4"/></clipPath></defs>
<rect x="18" y="65" width="44.8" height="44.8" rx="4" fill="#080808"/>
<g clip-path="url(#avc)"><circle cx="40.5" cy="87.5" r="21.4" fill="url(#moon)"/><circle cx="31.4" cy="82.6" r="2.2" fill="#f5f5f5"/><circle cx="29.6" cy="88.4" r="2.6" fill="#f6f6f6"/><polygon points="36.6,105.4 45.3,105.4 52,109.8 29.4,109.8" fill="url(#gnd)"/><path d="M40.4 93.8C39.5 95.2 39.3 99 39.5 105.8H41.5C41.7 99 41.3 95.2 40.4 93.8Z" fill="#0c0c0c"/><ellipse cx="58" cy="105.3" rx="1.9" ry="1.2" fill="#d8d8d8" opacity="0.85"/><path d="M39 73.6H42.5V80.2M39 73.6V78.4Q39 79.9 38.2 80.5M39 75.7H42.5M39 77.8H42.5M40.6 83V85.3M38.9 83.6L39.6 84.9M42.5 83.4L41.8 84.9M38.4 85.6H43M39.9 85.8Q39.8 88 38.4 88.9M41.4 85.8V88.2Q41.4 88.8 43 88.7" fill="none" stroke="#2a2a2a" stroke-width="0.75" opacity="0.9"/></g>
<path d="M603.4 166.6V151.4Q603.4 149.6 605.2 149.6H611.2L616.2 154.6V164.8Q616.2 166.6 614.4 166.6Z" fill="none" stroke="#fff" stroke-width="1.7" stroke-linecap="round" stroke-linejoin="round" />
<path d="M610.8 150V155H615.8" fill="none" stroke="#fff" stroke-width="1.4" stroke-linecap="round" stroke-linejoin="round" />
<path d="M601 155.2H597.2Q595.4 155.2 595.4 157V170.2Q595.4 172 597.2 172H606.6Q608.4 172 608.4 170.2V168.8" fill="none" stroke="#fff" stroke-width="1.7" stroke-linecap="round" stroke-linejoin="round" />
<circle cx="657.2" cy="157.4" r="8.1" fill="none" stroke="#858585" stroke-width="1.6"/>
<path d="M651.6 163.4L643.6 172.2" fill="none" stroke="#858585" stroke-width="1.7" stroke-linecap="round" stroke-linejoin="round" />
<circle cx="696.8" cy="152.8" r="3.2" fill="none" stroke="#858585" stroke-width="1.6"/>
<circle cx="696.8" cy="169.2" r="3.2" fill="none" stroke="#858585" stroke-width="1.6"/>
<circle cx="707.6" cy="156.8" r="3.2" fill="none" stroke="#858585" stroke-width="1.6"/>
<path d="M696.8 156V166M707.6 160C707.6 163.6 704.4 164.2 700.4 164.2C698 164.2 696.8 165 696.8 166" fill="none" stroke="#858585" stroke-width="1.6" stroke-linecap="round" stroke-linejoin="round" />
<path d="M739.2 156.4H747.8V172.2M739.2 164.2H756.6M739.2 156.4V172.2H756.6V164.2H747.8" fill="none" stroke="#858585" stroke-width="1.6" stroke-linecap="round" stroke-linejoin="round" />
<rect x="752.4" y="150.2" width="9" height="9" rx="0.8" fill="none" stroke="#858585" stroke-width="1.6"/>
<rect x="790.2" y="153.2" width="18.8" height="18.8" rx="1.2" fill="none" stroke="#858585" stroke-width="1.6"/>
<path d="M795.6 153.4C795.6 158 797.6 159.2 801.2 159.2H808.8M790.4 164.4H798.2C801.8 164.4 803.8 165.6 803.8 170V171.8" fill="none" stroke="#858585" stroke-width="1.6" stroke-linecap="round" stroke-linejoin="round" />
<path d="M834.2 161.6H853.4C854 159.8 853.6 158.4 852.8 157.2C854.2 156 855.8 156.4 856.4 157.6C857 157.2 857.8 157.2 858.2 157.6C857.6 159.6 856 160.6 854.2 160.8C852.6 166.4 848.4 169.8 842.6 169.8C837.6 169.8 834.6 166.8 834.2 161.6Z" fill="#858585"/>
<rect x="836.6" y="158.4" width="2.5" height="2.3" fill="#858585"/>
<rect x="839.6" y="158.4" width="2.5" height="2.3" fill="#858585"/>
<rect x="842.6" y="158.4" width="2.5" height="2.3" fill="#858585"/>
<rect x="845.6" y="158.4" width="2.5" height="2.3" fill="#858585"/>
<rect x="848.6" y="158.4" width="2.5" height="2.3" fill="#858585"/>
<rect x="839.6" y="155.6" width="2.5" height="2.3" fill="#858585"/>
<rect x="842.6" y="155.6" width="2.5" height="2.3" fill="#858585"/>
<rect x="845.6" y="155.6" width="2.5" height="2.3" fill="#858585"/>
<rect x="845.6" y="152.8" width="2.5" height="2.3" fill="#858585"/>
<circle cx="834" cy="209" r="1.6" fill="#d0d0d0"/>
<circle cx="841.6" cy="209" r="1.6" fill="#d0d0d0"/>
<circle cx="849.2" cy="209" r="1.6" fill="#d0d0d0"/>
<polygon points="593.8,246.8 593.8,256.2 601.3,251.5" fill="#c5c5c5"/>
<polygon points="592.90,282.75 602.30,282.75 597.60,289.15" fill="#c5c5c5"/>
<polygon points="611.60,314.90 621.80,314.90 616.70,322.00" fill="#c5c5c5"/>
<polygon points="623.30,347.90 633.50,347.90 628.40,355.00" fill="#c5c5c5"/>
<polygon points="623.30,512.90 633.50,512.90 628.40,520.00" fill="#c5c5c5"/>
<polygon points="626.0,676.6999999999999 626.0,686.1 633.5,681.4" fill="#c5c5c5"/>
<polygon points="614.1999999999999,709.6999999999999 614.1999999999999,719.1 621.6999999999999,714.4" fill="#c5c5c5"/>
<path d="M636.4 310.00H642.1999999999999L644.4 312.23H652.4Q654.0 312.23 654.0 313.72V314.84H640.4Q638.8 314.84 638.3 316.32L635.5999999999999 324.51Q634.8 324.69 634.8 323.58V311.49Q634.8 310.00 636.4 310.00Z" fill="#ff7043"/>
<path d="M640.1999999999999 316.14H655.4Q656.5999999999999 316.14 656.1999999999999 317.25L653.8 324.51Q653.4 325.62 652.0 325.62H636.1999999999999Q635.4 325.62 635.8 324.69L638.4 317.25Q638.8 316.14 640.1999999999999 316.14Z" fill="#ff7043"/>
<path d="M644.6 315.79999999999995H656.8L655.6 327.4L650.7 329.2L645.8 327.4Z" fill="#ffccbc"/>
<path d="M648.9 320.4L647 322.29999999999995L648.9 324.2M652.3 320.4L654.2 322.29999999999995L652.3 324.2" fill="none" stroke="#ff7043" stroke-width="1.3" stroke-linecap="round" stroke-linejoin="round" />
<path d="M648.2 343.60H654.0L656.2 345.83H664.2Q665.8000000000001 345.83 665.8000000000001 347.32V348.44H652.2Q650.6 348.44 650.1 349.92L647.4 358.11Q646.6 358.29 646.6 357.18V345.09Q646.6 343.60 648.2 343.60Z" fill="#90a4ae"/>
<path d="M652.0 349.74H667.2Q668.4 349.74 668.0 350.85L665.6 358.11Q665.2 359.22 663.8000000000001 359.22H648.0Q647.2 359.22 647.6 358.29L650.2 350.85Q650.6 349.74 652.0 349.74Z" fill="#90a4ae"/>
<rect x="660" y="375.4" width="18" height="18" fill="#ffca28"/>
<text x="676.6" y="391.5" text-anchor="end" font-family="Liberation Sans,sans-serif" font-size="10.799999999999999" fill="#33334a" stroke="#33334a" stroke-width="0.25">JS</text>
<path d="M662.4 409.4C659.4 409.4 660.0 412.4 660.0 414.6C660.0 416.8 659.0 417.8 657.4 418C659.0 418.2 660.0 419.2 660.0 421.4C660.0 423.6 659.4 426.6 662.4 426.6" fill="none" stroke="#fbc02d" stroke-width="1.9" stroke-linecap="round" stroke-linejoin="round" />
<path d="M673.8 409.4C676.8 409.4 676.1999999999999 412.4 676.1999999999999 414.6C676.1999999999999 416.8 677.1999999999999 417.8 678.8 418C677.1999999999999 418.2 676.1999999999999 419.2 676.1999999999999 421.4C676.1999999999999 423.6 676.8 426.6 673.8 426.6" fill="none" stroke="#fbc02d" stroke-width="1.9" stroke-linecap="round" stroke-linejoin="round" />
<rect x="663.9" y="421.6" width="1.8" height="1.8" fill="#fbc02d"/>
<rect x="667.1999999999999" y="421.6" width="1.8" height="1.8" fill="#fbc02d"/>
<rect x="670.5" y="421.6" width="1.8" height="1.8" fill="#fbc02d"/>
<path d="M663 441.4H671L676.6 447.0V458.59999999999997Q676.6 460.59999999999997 674.6 460.59999999999997H663Q661 460.59999999999997 661 458.59999999999997V443.4Q661 441.4 663 441.4Z" fill="#8bc34a"/>
<path d="M670.4 442.2V447.59999999999997H675.8Z" fill="#c5e1a5"/>
<path d="M667.2 451.4L664.6 454.2L667.2 457.0M670.4 451.4L673 454.2L670.4 457.0" fill="none" stroke="#2e2e2e" stroke-width="1.7" stroke-linecap="round" stroke-linejoin="round" />
<path d="M662.0 475H679.0L676.2 489.8L668.2 493L658.6 489.8L659.4 485.6H663.0L662.7 487.4L668.4 489.4L673.2 487.6L673.9 483.8H660.2L660.8000000000001 480.4H674.5L674.9 478.3H661.3000000000001Z" fill="#42a5f5"/>
<path d="M648.2 508.60H654.0L656.2 510.83H664.2Q665.8000000000001 510.83 665.8000000000001 512.32V513.44H652.2Q650.6 513.44 650.1 514.92L647.4 523.11Q646.6 523.29 646.6 522.18V510.09Q646.6 508.60 648.2 508.60Z" fill="#90a4ae"/>
<path d="M652.0 514.74H667.2Q668.4 514.74 668.0 515.85L665.6 523.11Q665.2 524.22 663.8000000000001 524.22H648.0Q647.2 524.22 647.6 523.29L650.2 515.85Q650.6 514.74 652.0 514.74Z" fill="#90a4ae"/>
<rect x="660" y="540.4" width="18" height="18" fill="#ffca28"/>
<text x="676.6" y="556.5" text-anchor="end" font-family="Liberation Sans,sans-serif" font-size="10.799999999999999" fill="#33334a" stroke="#33334a" stroke-width="0.25">JS</text>
<path d="M662.4 574.4C659.4 574.4 660.0 577.4 660.0 579.6C660.0 581.8 659.0 582.8 657.4 583C659.0 583.2 660.0 584.2 660.0 586.4C660.0 588.6 659.4 591.6 662.4 591.6" fill="none" stroke="#fbc02d" stroke-width="1.9" stroke-linecap="round" stroke-linejoin="round" />
<path d="M673.8 574.4C676.8 574.4 676.1999999999999 577.4 676.1999999999999 579.6C676.1999999999999 581.8 677.1999999999999 582.8 678.8 583C677.1999999999999 583.2 676.1999999999999 584.2 676.1999999999999 586.4C676.1999999999999 588.6 676.8 591.6 673.8 591.6" fill="none" stroke="#fbc02d" stroke-width="1.9" stroke-linecap="round" stroke-linejoin="round" />
<rect x="663.9" y="586.6" width="1.8" height="1.8" fill="#fbc02d"/>
<rect x="667.1999999999999" y="586.6" width="1.8" height="1.8" fill="#fbc02d"/>
<rect x="670.5" y="586.6" width="1.8" height="1.8" fill="#fbc02d"/>
<path d="M663 606.4H671L676.6 612.0V623.6Q676.6 625.6 674.6 625.6H663Q661 625.6 661 623.6V608.4Q661 606.4 663 606.4Z" fill="#8bc34a"/>
<path d="M670.4 607.1999999999999V612.6H675.8Z" fill="#c5e1a5"/>
<path d="M667.2 616.4L664.6 619.1999999999999L667.2 622.0M670.4 616.4L673 619.1999999999999L670.4 622.0" fill="none" stroke="#2e2e2e" stroke-width="1.7" stroke-linecap="round" stroke-linejoin="round" />
<path d="M662.0 640H679.0L676.2 654.8L668.2 658L658.6 654.8L659.4 650.6H663.0L662.7 652.4L668.4 654.4L673.2 652.6L673.9 648.8H660.2L660.8000000000001 645.4H674.5L674.9 643.3H661.3000000000001Z" fill="#42a5f5"/>
<path d="M648.6 673.4H654L656.4 676.0H663.4Q665 676.0 665 677.6V687.1999999999999Q665 688.8 663.4 688.8H648.6Q647 688.8 647 687.1999999999999V675.0Q647 673.4 648.6 673.4Z" fill="#afb42b"/>
<path d="M658.4 678.6H666L668.8 681.4V688.8Q668.8 690.1999999999999 667.4 690.1999999999999H658.4Q657 690.1999999999999 657 688.8V680.0Q657 678.6 658.4 678.6Z" fill="#f0f4c3"/>
<path d="M659.4 682.1999999999999H666M659.4 684.6H666M659.4 687.0H663.6" fill="none" stroke="#afb42b" stroke-width="1.4" stroke-linecap="round" stroke-linejoin="round" stroke-linecap="butt"/>
<path d="M636.6 706.4H642L644.4 709.0H651.4Q653 709.0 653 710.6V720.1999999999999Q653 721.8 651.4 721.8H636.6Q635 721.8 635 720.1999999999999V708.0Q635 706.4 636.6 706.4Z" fill="#8bc34a"/>
<rect x="644.8" y="713.0" width="10" height="10" rx="2.4" fill="#c5e1a5" opacity="0.85"/>
<rect x="646.4" y="711.4" width="10.6" height="10.4" rx="2.4" fill="#dcedc8"/>
<rect x="648" y="713.0" width="7.4" height="7.2" rx="0.8" fill="#8bc34a"/>
<path d="M651.7 714.0V719.1999999999999M649.1 716.6H654.3" fill="none" stroke="#f1f8e9" stroke-width="1.5" stroke-linecap="round" stroke-linejoin="round" stroke-linecap="butt"/>
<polygon points="656.10,747.50 650.65,757.13 639.75,757.13 634.30,747.50 639.75,737.87 650.65,737.87" fill="#3f51b5"/>
<polygon points="651.26,751.00 645.20,754.50 639.14,751.00 639.14,744.00 645.20,740.50 651.26,744.00" fill="#2e2e2e"/>
<polygon points="649.53,750.00 645.20,752.50 640.87,750.00 640.87,745.00 645.20,742.50 649.53,745.00" fill="#7986cb"/>
<rect x="636" y="771.4" width="18" height="18" fill="#ffca28"/>
<text x="652.6" y="787.5" text-anchor="end" font-family="Liberation Sans,sans-serif" font-size="10.799999999999999" fill="#33334a" stroke="#33334a" stroke-width="0.25">JS</text>
<path d="M638.4 805.4C635.4 805.4 636.0 808.4 636.0 810.6C636.0 812.8 635.0 813.8 633.4 814C635.0 814.2 636.0 815.2 636.0 817.4C636.0 819.6 635.4 822.6 638.4 822.6" fill="none" stroke="#fbc02d" stroke-width="1.9" stroke-linecap="round" stroke-linejoin="round" />
<path d="M649.8 805.4C652.8 805.4 652.1999999999999 808.4 652.1999999999999 810.6C652.1999999999999 812.8 653.1999999999999 813.8 654.8 814C653.1999999999999 814.2 652.1999999999999 815.2 652.1999999999999 817.4C652.1999999999999 819.6 652.8 822.6 649.8 822.6" fill="none" stroke="#fbc02d" stroke-width="1.9" stroke-linecap="round" stroke-linejoin="round" />
<rect x="639.9" y="817.6" width="1.8" height="1.8" fill="#fbc02d"/>
<rect x="643.1999999999999" y="817.6" width="1.8" height="1.8" fill="#fbc02d"/>
<rect x="646.5" y="817.6" width="1.8" height="1.8" fill="#fbc02d"/>
<path d="M638.0 838H655.0L652.2 852.8L644.2 856L634.6 852.8L635.4 848.6H639.0L638.7 850.4L644.4 852.4L649.2 850.6L649.9 846.8H636.2L636.8000000000001 843.4H650.5L650.9 841.3H637.3000000000001Z" fill="#42a5f5"/>
<path d="M638.4 871.4C635.4 871.4 636.0 874.4 636.0 876.6C636.0 878.8 635.0 879.8 633.4 880C635.0 880.2 636.0 881.2 636.0 883.4C636.0 885.6 635.4 888.6 638.4 888.6" fill="none" stroke="#fbc02d" stroke-width="1.9" stroke-linecap="round" stroke-linejoin="round" />
<path d="M649.8 871.4C652.8 871.4 652.1999999999999 874.4 652.1999999999999 876.6C652.1999999999999 878.8 653.1999999999999 879.8 654.8 880C653.1999999999999 880.2 652.1999999999999 881.2 652.1999999999999 883.4C652.1999999999999 885.6 652.8 888.6 649.8 888.6" fill="none" stroke="#fbc02d" stroke-width="1.9" stroke-linecap="round" stroke-linejoin="round" />
<rect x="639.9" y="883.6" width="1.8" height="1.8" fill="#fbc02d"/>
<rect x="643.1999999999999" y="883.6" width="1.8" height="1.8" fill="#fbc02d"/>
<rect x="646.5" y="883.6" width="1.8" height="1.8" fill="#fbc02d"/>
<path d="M638.4 904.4C635.4 904.4 636.0 907.4 636.0 909.6C636.0 911.8 635.0 912.8 633.4 913C635.0 913.2 636.0 914.2 636.0 916.4C636.0 918.6 635.4 921.6 638.4 921.6" fill="none" stroke="#fbc02d" stroke-width="1.9" stroke-linecap="round" stroke-linejoin="round" />
<path d="M649.8 904.4C652.8 904.4 652.1999999999999 907.4 652.1999999999999 909.6C652.1999999999999 911.8 653.1999999999999 912.8 654.8 913C653.1999999999999 913.2 652.1999999999999 914.2 652.1999999999999 916.4C652.1999999999999 918.6 652.8 921.6 649.8 921.6" fill="none" stroke="#fbc02d" stroke-width="1.9" stroke-linecap="round" stroke-linejoin="round" />
<rect x="639.9" y="916.6" width="1.8" height="1.8" fill="#fbc02d"/>
<rect x="643.1999999999999" y="916.6" width="1.8" height="1.8" fill="#fbc02d"/>
<rect x="646.5" y="916.6" width="1.8" height="1.8" fill="#fbc02d"/>
<path d="M638.4 937.4C635.4 937.4 636.0 940.4 636.0 942.6C636.0 944.8 635.0 945.8 633.4 946C635.0 946.2 636.0 947.2 636.0 949.4C636.0 951.6 635.4 954.6 638.4 954.6" fill="none" stroke="#fbc02d" stroke-width="1.9" stroke-linecap="round" stroke-linejoin="round" />
<path d="M649.8 937.4C652.8 937.4 652.1999999999999 940.4 652.1999999999999 942.6C652.1999999999999 944.8 653.1999999999999 945.8 654.8 946C653.1999999999999 946.2 652.1999999999999 947.2 652.1999999999999 949.4C652.1999999999999 951.6 652.8 954.6 649.8 954.6" fill="none" stroke="#fbc02d" stroke-width="1.9" stroke-linecap="round" stroke-linejoin="round" />
<rect x="639.9" y="949.6" width="1.8" height="1.8" fill="#fbc02d"/>
<rect x="643.1999999999999" y="949.6" width="1.8" height="1.8" fill="#fbc02d"/>
<rect x="646.5" y="949.6" width="1.8" height="1.8" fill="#fbc02d"/>
<path d="M902.6 152.0C899.6 152.0 900.2 155.0 900.2 157.2C900.2 159.4 899.2 160.4 897.6 160.6C899.2 160.79999999999998 900.2 161.79999999999998 900.2 164.0C900.2 166.2 899.6 169.2 902.6 169.2" fill="none" stroke="#fbc02d" stroke-width="1.9" stroke-linecap="round" stroke-linejoin="round" />
<path d="M914.0 152.0C917.0 152.0 916.4 155.0 916.4 157.2C916.4 159.4 917.4 160.4 919.0 160.6C917.4 160.79999999999998 916.4 161.79999999999998 916.4 164.0C916.4 166.2 917.0 169.2 914.0 169.2" fill="none" stroke="#fbc02d" stroke-width="1.9" stroke-linecap="round" stroke-linejoin="round" />
<rect x="904.1" y="164.2" width="1.8" height="1.8" fill="#fbc02d"/>
<rect x="907.4" y="164.2" width="1.8" height="1.8" fill="#fbc02d"/>
<rect x="910.7" y="164.2" width="1.8" height="1.8" fill="#fbc02d"/>
<path d="M1083 151.20000000000002H1091L1096.6 156.8V168.4Q1096.6 170.4 1094.6 170.4H1083Q1081 170.4 1081 168.4V153.20000000000002Q1081 151.20000000000002 1083 151.20000000000002Z" fill="#8bc34a"/>
<path d="M1090.4 152.00000000000003V157.4H1095.8Z" fill="#c5e1a5"/>
<path d="M1087.2 161.20000000000002L1084.6 164.00000000000003L1087.2 166.8M1090.4 161.20000000000002L1093 164.00000000000003L1090.4 166.8" fill="none" stroke="#2e2e2e" stroke-width="1.7" stroke-linecap="round" stroke-linejoin="round" />
<path d="M1279.0 152.0C1276.0 152.0 1276.6000000000001 155.0 1276.6000000000001 157.2C1276.6000000000001 159.4 1275.6000000000001 160.4 1274.0 160.6C1275.6000000000001 160.79999999999998 1276.6000000000001 161.79999999999998 1276.6000000000001 164.0C1276.6000000000001 166.2 1276.0 169.2 1279.0 169.2" fill="none" stroke="#fbc02d" stroke-width="1.9" stroke-linecap="round" stroke-linejoin="round" />
<path d="M1290.4 152.0C1293.4 152.0 1292.8 155.0 1292.8 157.2C1292.8 159.4 1293.8 160.4 1295.4 160.6C1293.8 160.79999999999998 1292.8 161.79999999999998 1292.8 164.0C1292.8 166.2 1293.4 169.2 1290.4 169.2" fill="none" stroke="#fbc02d" stroke-width="1.9" stroke-linecap="round" stroke-linejoin="round" />
<rect x="1280.5" y="164.2" width="1.8" height="1.8" fill="#fbc02d"/>
<rect x="1283.8" y="164.2" width="1.8" height="1.8" fill="#fbc02d"/>
<rect x="1287.1" y="164.2" width="1.8" height="1.8" fill="#fbc02d"/>
<path d="M1467.4 152H1484.4L1481.6 166.8L1473.6 170L1464 166.8L1464.8 162.6H1468.4L1468.1 164.4L1473.8 166.4L1478.6 164.6L1479.3 160.8H1465.6L1466.2 157.4H1479.9L1480.3 155.3H1466.7Z" fill="#42a5f5"/>
<rect x="1657" y="152.0" width="18" height="18" fill="#ffca28"/>
<text x="1673.6" y="168.1" text-anchor="end" font-family="Liberation Sans,sans-serif" font-size="10.799999999999999" fill="#33334a" stroke="#33334a" stroke-width="0.25">JS</text>
<path d="M1787.2 155.5L1799.4 166.9M1799.4 155.5L1787.2 166.9" fill="none" stroke="#ffffff" stroke-width="1.9" stroke-linecap="round" stroke-linejoin="round" />
<rect x="2463.8" y="152.2" width="16.6" height="17" rx="1.2" fill="none" stroke="#dcdcdc" stroke-width="1.8"/>
<path d="M2472.1 152.2V169.2" fill="none" stroke="#dcdcdc" stroke-width="1.8" stroke-linecap="round" stroke-linejoin="round" />
<circle cx="2512.6" cy="161" r="1.7" fill="#dcdcdc"/>
<circle cx="2520" cy="161" r="1.7" fill="#dcdcdc"/>
<circle cx="2527.4" cy="161" r="1.7" fill="#dcdcdc"/>
<path d="M899 193.2H915M899 197.9H915M899 202.6H915M899 207.3H915" fill="none" stroke="#9d9d9d" stroke-width="1.7" stroke-linecap="round" stroke-linejoin="round" stroke-linecap="butt"/>
<rect x="893.6" y="192.29999999999998" width="2.2" height="1.8" fill="#9d9d9d"/>
<rect x="893.6" y="197.0" width="2.2" height="1.8" fill="#9d9d9d"/>
<rect x="893.6" y="201.7" width="2.2" height="1.8" fill="#9d9d9d"/>
<rect x="893.6" y="206.4" width="2.2" height="1.8" fill="#9d9d9d"/>
<path d="M942.6 190.4H956.6V209L949.6 202.8L942.6 209Z" fill="none" stroke="#b0b0b0" stroke-width="1.8" stroke-linecap="round" stroke-linejoin="round" stroke-linejoin="miter"/>
<path d="M1003.4 200.4H985.6M993 192.6L985.2 200.4L993 208.2" fill="none" stroke="#a8a8a8" stroke-width="1.7" stroke-linecap="round" stroke-linejoin="round" />
<path d="M1028 200.4H1045.6M1038.2 192.6L1046 200.4L1038.2 208.2" fill="none" stroke="#585858" stroke-width="1.7" stroke-linecap="round" stroke-linejoin="round" />
<path d="M1131.4 193.4L1138.5 200.4L1131.4 207.4" fill="none" stroke="#8c8c8c" stroke-width="1.7" stroke-linecap="round" stroke-linejoin="round" stroke-linejoin="miter" stroke-linecap="butt"/>
<path d="M1212.4 193.4L1219.5 200.4L1212.4 207.4" fill="none" stroke="#8c8c8c" stroke-width="1.7" stroke-linecap="round" stroke-linejoin="round" stroke-linejoin="miter" stroke-linecap="butt"/>
<path d="M1342.8 193.4L1349.8999999999999 200.4L1342.8 207.4" fill="none" stroke="#b0b0b0" stroke-width="1.7" stroke-linecap="round" stroke-linejoin="round" stroke-linejoin="miter" stroke-linecap="butt"/>
<path d="M1437.4 193.4L1444.5 200.4L1437.4 207.4" fill="none" stroke="#8c8c8c" stroke-width="1.7" stroke-linecap="round" stroke-linejoin="round" stroke-linejoin="miter" stroke-linecap="butt"/>
<rect x="1230.4" y="190.79999999999998" width="17.6" height="17.6" fill="#ffca28"/>
<text x="1246.6" y="206.49999999999997" text-anchor="end" font-family="Liberation Sans,sans-serif" font-size="10.56" fill="#33334a" stroke="#33334a" stroke-width="0.25">JS</text>
<path d="M1368.72 199.02A5.54 5.54 0 0 1 1376.03 191.43L1373.46 194.00L1376.00 196.54L1378.57 193.97A5.54 5.54 0 0 1 1370.98 201.28L1362.36 209.90A1.6 1.6 0 0 1 1360.10 207.64Z" fill="none" stroke="#9d9d9d" stroke-width="1.75" stroke-linecap="round" stroke-linejoin="round" />
<path d="M1463.12 199.02A5.54 5.54 0 0 1 1470.43 191.43L1467.86 194.00L1470.40 196.54L1472.97 193.97A5.54 5.54 0 0 1 1465.38 201.28L1456.76 209.90A1.6 1.6 0 0 1 1454.50 207.64Z" fill="none" stroke="#9d9d9d" stroke-width="1.75" stroke-linecap="round" stroke-linejoin="round" />
<path d="M976.4 273.4L984.2 281L992 273.4" fill="none" stroke="#c5c5c5" stroke-width="1.4" stroke-linecap="round" stroke-linejoin="round" />
<path d="M976.4 321.4L984.2 329L992 321.4" fill="none" stroke="#c5c5c5" stroke-width="1.4" stroke-linecap="round" stroke-linejoin="round" />
<path d="M976.4 369.4L984.2 377L992 369.4" fill="none" stroke="#c5c5c5" stroke-width="1.4" stroke-linecap="round" stroke-linejoin="round" />
<ellipse cx="2481.4" cy="1098.4" rx="20.6" ry="10.6" fill="#c4262e" opacity="0.95"/>
<text x="2481" y="1103.6" text-anchor="middle" font-family="Liberation Sans,sans-serif" font-style="italic" font-size="16.5" fill="#dcbcbc" stroke="#dcbcbc" stroke-width="0.5">php</text>
</svg>
</div></body></html>
